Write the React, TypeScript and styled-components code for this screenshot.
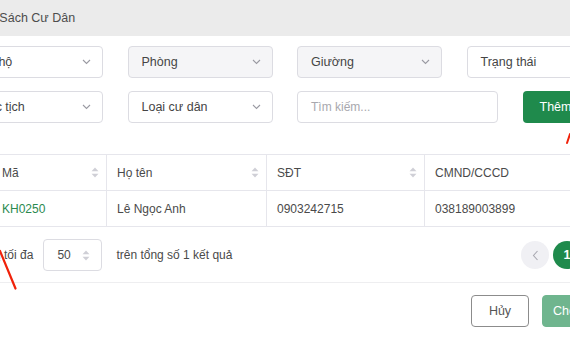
import React from "react";
import styled, { createGlobalStyle } from "styled-components";

const GlobalStyle = createGlobalStyle`
  html, body {
    margin: 0;
    padding: 0;
    background: #ffffff;
    overflow: hidden;
  }
  body {
    font-family: "Liberation Sans", Arial, sans-serif;
    color: #4a4a4a;
  }
`;

const Page = styled.div`
  position: relative;
  width: 570px;
  height: 340px;
  overflow: hidden;
`;

const Modal = styled.div`
  width: 658px;
  margin-left: -42px;
  background: #ffffff;
`;

const Header = styled.div`
  height: 36px;
  background: #ebebeb;
  display: flex;
  align-items: center;
  padding-left: 8px;
  font-size: 12.5px;
  color: #4d4d4d;
`;

const Filters = styled.div`
  display: flex;
  flex-direction: column;
  gap: 13px;
  padding: 10px 4px 0 0;
`;

const FilterRow = styled.div<{ $cols: string }>`
  display: grid;
  grid-template-columns: ${(p) => p.$cols};
  column-gap: 24.5px;
`;

const SelectBox = styled.div<{ $disabled?: boolean }>`
  height: 32px;
  box-sizing: border-box;
  border: 1px solid #dcdce2;
  border-radius: 4px;
  background: ${(p) => (p.$disabled ? "#f5f5f7" : "#ffffff")};
  display: flex;
  align-items: center;
  justify-content: space-between;
  padding: 0 11px 0 13px;
  font-size: 12.5px;
  color: #454545;
`;

const SearchInput = styled.div`
  height: 32px;
  box-sizing: border-box;
  border: 1px solid #dcdce2;
  border-radius: 4px;
  display: flex;
  align-items: center;
  padding: 0 13px;
  font-size: 12px;
  color: #a8a8ae;
`;

const PrimaryButton = styled.div`
  height: 32px;
  box-sizing: border-box;
  border-radius: 4px;
  background: #1f8a4c;
  color: #ffffff;
  display: flex;
  align-items: center;
  padding: 0 17px;
  font-size: 12.5px;
  white-space: nowrap;
`;

const Table = styled.div`
  margin: 31px 0 0 34px;
  border-top: 1px solid #e6e6ec;
`;

const TableRow = styled.div`
  display: grid;
  grid-template-columns: 114px 160px 158px 1fr;
  border-bottom: 1px solid #e6e6ec;
`;

const Cell = styled.div<{ $green?: boolean }>`
  height: 35px;
  display: flex;
  align-items: center;
  justify-content: space-between;
  padding: 0 7px 0 10px;
  font-size: 12px;
  color: ${(p) => (p.$green ? "#2b8a4f" : "#4a4a4a")};
  & + & {
    border-left: 1px solid #e6e6ec;
  }
`;

const Pagination = styled.div`
  display: flex;
  align-items: center;
  padding: 12px 3px 11px 2px;
  font-size: 12px;
  color: #4a4a4a;
  border-bottom: 1px solid #eeeef0;
`;

const PageSize = styled.div`
  width: 59px;
  height: 32px;
  box-sizing: border-box;
  margin: 0 14px 0 10px;
  border: 1px solid #dcdce2;
  border-radius: 4px;
  display: flex;
  align-items: center;
  justify-content: space-between;
  padding: 0 11px 0 13px;
`;

const Pager = styled.div`
  margin-left: auto;
  display: flex;
  gap: 4px;
`;

const PageCircle = styled.div<{ $active?: boolean }>`
  width: 28px;
  height: 28px;
  border-radius: 50%;
  display: flex;
  align-items: center;
  justify-content: center;
  background: ${(p) => (p.$active ? "#1f8a4c" : "#f0f0f4")};
  color: ${(p) => (p.$active ? "#ffffff" : "#aaaab0")};
  font-size: 12.5px;
  font-weight: bold;
`;

const Footer = styled.div`
  display: flex;
  justify-content: flex-end;
  gap: 13px;
  padding: 12px 16px 0 0;
`;

const FooterButton = styled.div<{ $primary?: boolean }>`
  width: 58px;
  height: 32px;
  box-sizing: border-box;
  border-radius: 4px;
  display: flex;
  align-items: center;
  justify-content: ${(p) => (p.$primary ? "flex-start" : "center")};
  padding-left: ${(p) => (p.$primary ? "10px" : "0")};
  font-size: 12.5px;
  border: 1px solid ${(p) => (p.$primary ? "#6fb58e" : "#8c8c8c")};
  background: ${(p) => (p.$primary ? "#6fb58e" : "#ffffff")};
  color: ${(p) => (p.$primary ? "#ffffff" : "#555555")};
`;

const Annotation = styled.svg`
  position: absolute;
  left: 0;
  top: 0;
  pointer-events: none;
`;

const Chevron = () => (
  <svg width="9" height="6" viewBox="0 0 9 6">
    <polyline points="1,1 4.5,4.5 8,1" fill="none" stroke="#9a9aa2" strokeWidth="1.1" />
  </svg>
);

const SortIcon = () => (
  <svg width="8" height="11" viewBox="0 0 8 11">
    <polygon points="4,0.5 7.5,4.3 0.5,4.3" fill="#cfcfd6" />
    <polygon points="4,10.5 7.5,6.7 0.5,6.7" fill="#cfcfd6" />
  </svg>
);

const Select = ({ label, disabled }: { label: string; disabled?: boolean }) => (
  <SelectBox $disabled={disabled}>
    <span>{label}</span>
    <Chevron />
  </SelectBox>
);

const App = () => {
  return (
    <Page>
      <GlobalStyle />
      <Modal>
        <Header>Danh Sách Cư Dân</Header>
        <Filters>
          <FilterRow $cols="145px 145px 145px 145px">
            <Select label="Căn hộ" />
            <Select label="Phòng" disabled />
            <Select label="Giường" disabled />
            <Select label="Trạng thái" />
          </FilterRow>
          <FilterRow $cols="145px 145px 201px 1fr">
            <Select label="Quốc tịch" />
            <Select label="Loại cư dân" />
            <SearchInput>Tìm kiếm...</SearchInput>
            <PrimaryButton>Thêm mới</PrimaryButton>
          </FilterRow>
        </Filters>

        <Table>
          <TableRow>
            <Cell>
              Mã <SortIcon />
            </Cell>
            <Cell>
              Họ tên <SortIcon />
            </Cell>
            <Cell>
              SĐT <SortIcon />
            </Cell>
            <Cell>CMND/CCCD</Cell>
          </TableRow>
          <TableRow>
            <Cell $green>KH0250</Cell>
            <Cell>Lê Ngọc Anh</Cell>
            <Cell>0903242715</Cell>
            <Cell>038189003899</Cell>
          </TableRow>
        </Table>

        <Pagination>
          <span>Hiển thị tối đa</span>
          <PageSize>
            <span>50</span>
            <SortIcon />
          </PageSize>
          <span>trên tổng số 1 kết quả</span>
          <Pager>
            <PageCircle>
              <svg width="7" height="11" viewBox="0 0 7 11">
                <polyline points="5.5,1 1.5,5.5 5.5,10" fill="none" stroke="#a8a8b0" strokeWidth="1.1" />
              </svg>
            </PageCircle>
            <PageCircle $active>1</PageCircle>
            <PageCircle>
              <svg width="7" height="11" viewBox="0 0 7 11">
                <polyline points="1.5,1 5.5,5.5 1.5,10" fill="none" stroke="#a8a8b0" strokeWidth="1.1" />
              </svg>
            </PageCircle>
          </Pager>
        </Pagination>

        <Footer>
          <FooterButton>Hủy</FooterButton>
          <FooterButton $primary>Chọn</FooterButton>
        </Footer>
      </Modal>

      <Annotation width="570" height="340" viewBox="0 0 570 340">
        <line x1="0" y1="251" x2="15.5" y2="288.5" stroke="#f0220a" strokeWidth="2.2" strokeLinecap="round" />
        <line x1="570" y1="134" x2="567" y2="143" stroke="#f0220a" strokeWidth="2" strokeLinecap="round" />
      </Annotation>
    </Page>
  );
};

export default App;
